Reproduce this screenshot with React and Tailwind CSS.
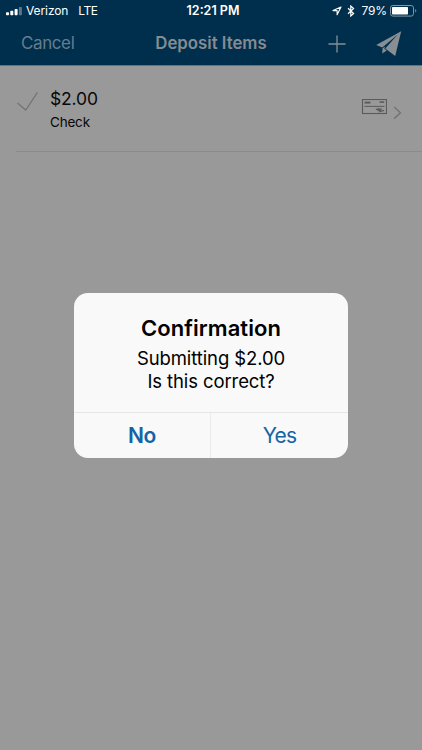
import { useState } from "react";

const deposits = [{ id: 1, amount: "$2.00", type: "Check" }];

function SignalIcon() {
  return (
    <svg width="18" height="9" viewBox="0 0 18 9" fill="white">
      <rect x="0" y="5.2" width="3" height="3" rx="0.7" />
      <rect x="4.3" y="3.8" width="3" height="4.4" rx="0.7" />
      <rect x="8.6" y="2" width="3" height="6.2" rx="0.7" />
      <rect x="12.9" y="0" width="3" height="8.2" rx="0.7" opacity="0.35" />
    </svg>
  );
}

function LocationIcon() {
  return (
    <svg width="10" height="10" viewBox="0 0 10 10" fill="none" stroke="white" strokeWidth="1.1" strokeLinejoin="round">
      <path d="M9 1 L1 4.6 H5.1 V8.8 Z" />
    </svg>
  );
}

function BluetoothIcon() {
  return (
    <svg width="8" height="12" viewBox="0 0 8 12" fill="none" stroke="white" strokeWidth="1.2">
      <path d="M1 3.3 L6.6 8.5 L3.8 11 V1 L6.6 3.5 L1 8.7" />
    </svg>
  );
}

function BatteryIcon() {
  return (
    <svg width="27" height="12" viewBox="0 0 27 12">
      <rect x="0.5" y="0.5" width="23" height="10.6" rx="2.4" fill="none" stroke="#8297a6" />
      <rect x="2" y="2" width="16" height="7.6" rx="0.8" fill="white" />
      <path d="M25 4 Q26.4 4.5 26.4 5.8 Q26.4 7.1 25 7.6 Z" fill="#667f91" />
    </svg>
  );
}

function SendIcon() {
  return (
    <svg width="26" height="26" viewBox="0 0 26 26" fill="#878e94">
      <path d="M25.2 0.2 L0.2 14 L6.3 16.5 L21.8 3.6 L9.3 17.4 L19.2 25 Z" />
      <path d="M6.6 17.2 L6.2 22.6 L10.7 19.4 L8.2 17.6 L9.4 15.4 Z" />
    </svg>
  );
}

function CheckDocumentIcon() {
  return (
    <svg width="26" height="16" viewBox="0 0 26 16" fill="none" stroke="#5b5b5b">
      <rect x="1.5" y="0.5" width="24" height="14" strokeWidth="1.1" />
      <path d="M3.6 3.6 H9.5" strokeWidth="2" />
      <path d="M18.6 3.1 H23.2" strokeWidth="1.6" />
      <path d="M3.4 7.4 H23.5" strokeWidth="1" />
      <path d="M14.8 10.4 L18.2 9.8 L16.6 11.6 L20 10.4 L18.8 12.5 L23 11.4" strokeWidth="1.2" />
    </svg>
  );
}

function StatusBar() {
  return (
    <div className="grid h-[22px] grid-cols-[1fr_auto_1fr] items-center text-[12px] leading-[22px] text-white">
      <div className="flex items-center pl-[6px]">
        <SignalIcon />
        <span className="ml-[2px] tracking-[-0.1px]">Verizon</span>
        <span className="ml-[10px] tracking-[-0.5px]">LTE</span>
      </div>
      <span className="pl-[4px] text-[12.5px] font-semibold">12:21 PM</span>
      <div className="flex items-center justify-end pr-[5px]">
        <LocationIcon />
        <span className="mr-[6px] ml-[5px]">
          <BluetoothIcon />
        </span>
        <span className="mr-[3px] tracking-[-0.1px]">79%</span>
        <BatteryIcon />
      </div>
    </div>
  );
}

function NavBar() {
  return (
    <div className="grid h-[43px] grid-cols-[1fr_auto_1fr] items-center text-[17px] text-[#858b91]">
      <button type="button" className="justify-self-start pl-[21px] text-[#667c8c] tracking-[-0.4px]">
        Cancel
      </button>
      <h1 className="text-[16.8px] font-semibold">Deposit Items</h1>
      <div className="flex items-center justify-end pr-[20px]">
        <svg width="18" height="18" viewBox="0 0 18 18" stroke="#878e94" strokeWidth="1.3">
          <path d="M9 0.5 V17.5 M0.5 9 H17.5" />
        </svg>
        <span className="ml-[30px]">
          <SendIcon />
        </span>
      </div>
    </div>
  );
}

function DepositRow({ item }) {
  return (
    <div className="flex h-[85px] pl-[16px]">
      <svg width="23" height="21" viewBox="0 0 23 21" fill="none" stroke="#737373" strokeWidth="1.2" className="mt-[25px]">
        <path d="M1.5 12 L9.7 19 L21.5 1.3" />
      </svg>
      <div className="mt-[21px] ml-[11px] flex-1 text-[#080808]">
        <p className="text-[17.5px] leading-6 tracking-[-0.15px]">{item.amount}</p>
        <p className="mt-[1px] text-[13.5px] leading-5 tracking-[-0.2px]">{item.type}</p>
      </div>
      <div className="flex pr-[20px]">
        <span className="mt-[33px]">
          <CheckDocumentIcon />
        </span>
        <svg width="9" height="14" viewBox="0 0 9 14" fill="none" stroke="#747474" strokeWidth="1.5" className="mt-[40px] ml-[6px]">
          <path d="M1.2 1 L7.4 6.8 L1.2 12.6" />
        </svg>
      </div>
    </div>
  );
}

function ConfirmDialog({ onClose }) {
  return (
    <div className="absolute inset-0 flex items-center justify-center">
      <div
        role="alertdialog"
        className="flex h-[165px] w-[274px] flex-col overflow-hidden rounded-[14px] bg-[#f9f9f9] text-center text-black"
      >
        <div className="flex-1 pt-[21px]">
          <h2 className="text-[22px] leading-7 font-semibold tracking-[0.05px]">Confirmation</h2>
          <p className="mt-[5px] text-[18.5px] leading-[23px] tracking-[-0.1px]">
            Submitting $2.00
            <br />
            Is this correct?
          </p>
        </div>
        <div className="grid h-[46px] grid-cols-2 border-t border-[#e5e6e7] text-[21px] text-[#1464a5]">
          <button type="button" onClick={onClose} className="border-r border-[#e9eaeb] pt-[1px] font-semibold tracking-[-0.3px]">
            No
          </button>
          <button type="button" onClick={onClose} className="pt-[1px] tracking-[-0.9px]">
            Yes
          </button>
        </div>
      </div>
    </div>
  );
}

export default function App() {
  const [confirming, setConfirming] = useState(true);

  return (
    <main className="relative h-[750px] w-[422px] overflow-hidden bg-[#999999] font-['Inter',sans-serif]">
      <header className="h-[66px] border-b border-[#617581] bg-[#002f4d]">
        <StatusBar />
        <NavBar />
      </header>
      <section>
        {deposits.map((item) => (
          <DepositRow key={item.id} item={item} />
        ))}
        <div className="ml-[16px] border-b border-[#8b8b8b]" />
      </section>
      {confirming && <ConfirmDialog onClose={() => setConfirming(false)} />}
    </main>
  );
}
